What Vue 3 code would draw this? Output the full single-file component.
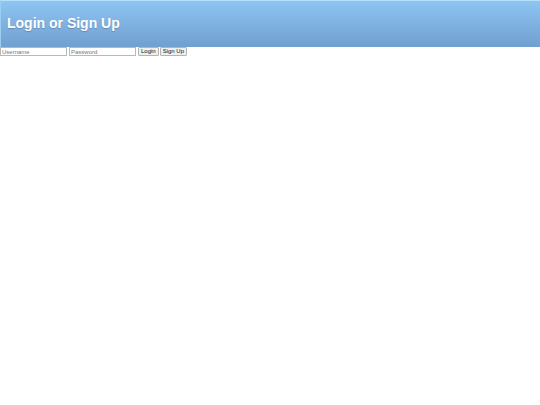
<template>
  <header class="toolbar">
    <h1>Login or Sign Up</h1>
  </header>
  <form class="login-form" @submit.prevent="login">
    <input v-model="username" class="field" type="text" placeholder="Username" aria-label="Username" />
    <input v-model="password" class="field" type="password" placeholder="Password" aria-label="Password" />
    <div class="actions">
      <button type="submit">Login</button>
      <button type="button" @click="signUp">Sign Up</button>
    </div>
  </form>
</template>

<script setup>
import { ref } from "vue";

const emit = defineEmits(["login", "signUp"]);

const username = ref("");
const password = ref("");

function login() {
  emit("login", { username: username.value, password: password.value });
}

function signUp() {
  emit("signUp", { username: username.value, password: password.value });
}
</script>

<style>
body {
  margin: 0;
  background: #fff;
  font-family: "Liberation Sans", Arial, sans-serif;
}
</style>

<style scoped>
.toolbar {
  padding: 14px 6px 15px;
  border-top: 1px solid #b5e0fa;
  border-left: 1px solid #9ccdf2;
  background: linear-gradient(#8ec5f2, #709fd0);
}

h1 {
  margin: 0;
  color: #fff;
  font-size: 14px;
  line-height: 17px;
  text-shadow: 0 1px 1px rgba(0, 0, 0, 0.2);
}

.login-form {
  display: flex;
  gap: 2px;
}

.field {
  box-sizing: border-box;
  width: 67px;
  height: 9px;
  padding: 0 1px;
  border: 1px solid #b8b8b8;
  border-radius: 0;
  background: #fff;
  color: #222;
  font: 6px/7px "Liberation Sans", Arial, sans-serif;
}

.field::placeholder {
  color: #777;
}

.actions {
  display: flex;
  gap: 1px;
}

button {
  box-sizing: border-box;
  height: 9px;
  padding: 0 2px;
  border: 1px solid #b4b4b4;
  border-radius: 1px;
  background: #efefef;
  color: #111;
  font: 6px/7px "Liberation Sans", Arial, sans-serif;
}
</style>
